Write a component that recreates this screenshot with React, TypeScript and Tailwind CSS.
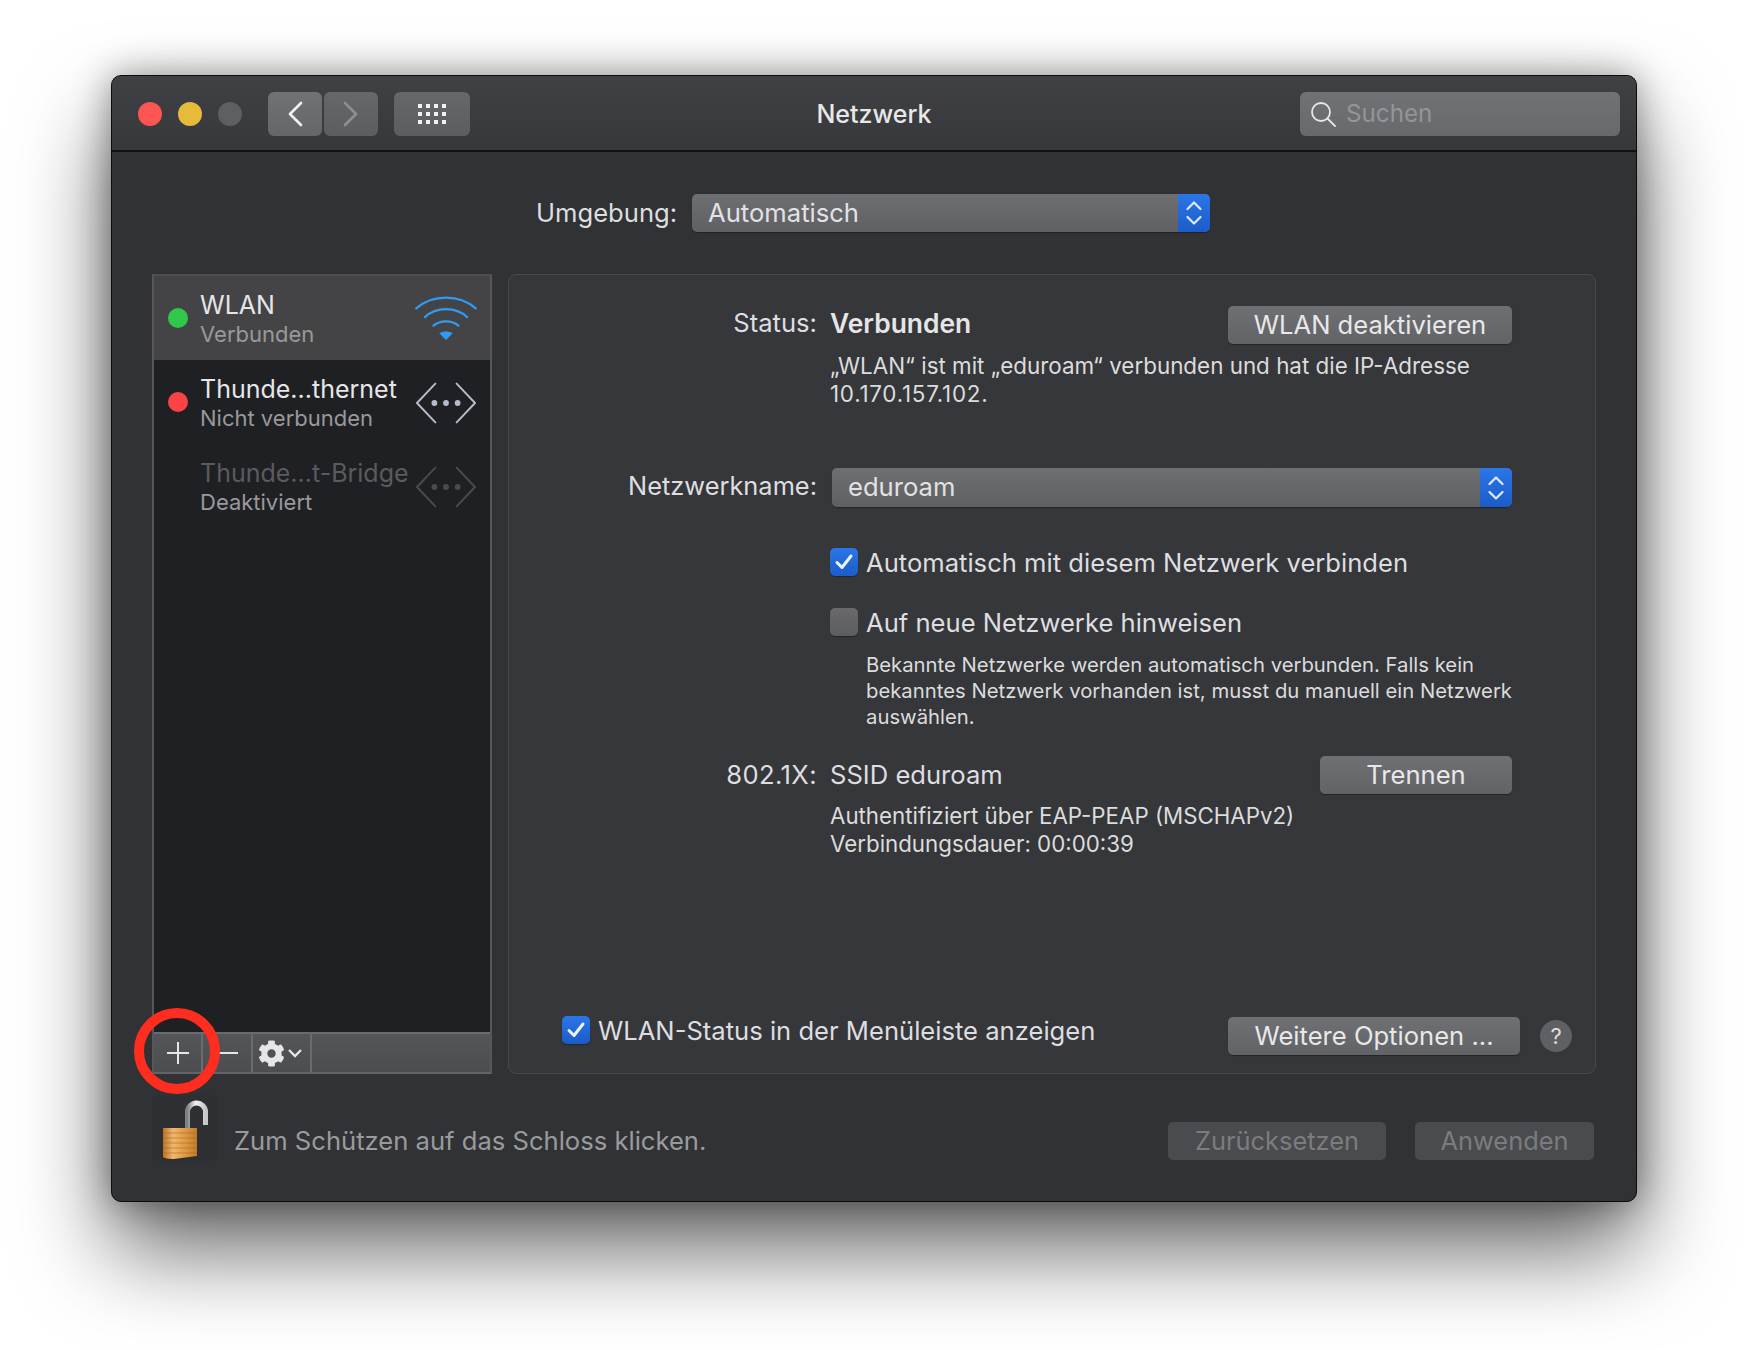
import { FaCog } from "react-icons/fa";

const FONT = "font-['Inter','Noto_Sans',sans-serif]";

function Stepper({ height }: { height: number }) {
  return (
    <div className="flex w-[32px] shrink-0 items-center justify-center rounded-r-[5px] bg-gradient-to-b from-[#2b76e8] to-[#1b5cc8]">
      <svg width="16" height={height} viewBox="0 0 16 28" fill="none" stroke="#dfe9fb" strokeWidth="2.2" strokeLinecap="round" strokeLinejoin="round">
        <path d="M1.5 10 L8 3.5 L14.5 10" />
        <path d="M1.5 18 L8 24.5 L14.5 18" />
      </svg>
    </div>
  );
}

function Select({ value, className }: { value: string; className: string }) {
  return (
    <div className={`flex overflow-hidden rounded-[5px] bg-gradient-to-b from-[#6e6f72] to-[#5f6063] shadow-[0_1px_1px_rgba(0,0,0,0.35)] ${className}`}>
      <span className="flex-1 pl-4 text-[25.6px] leading-[38px] text-[#e2e2e3]">{value}</span>
      <Stepper height={28} />
    </div>
  );
}

function Button({ label, className }: { label: string; className: string }) {
  return (
    <div className={`flex h-[38px] shrink-0 items-center justify-center rounded-[5px] bg-gradient-to-b from-[#6f7073] to-[#626366] text-[25.6px] leading-none text-[#e8e8e9] shadow-[0_1px_1px_rgba(0,0,0,0.35)] ${className}`}>
      {label}
    </div>
  );
}

function Checkbox({ checked }: { checked: boolean }) {
  if (!checked) {
    return <div className="h-[28px] w-[28px] shrink-0 rounded-[5px] bg-gradient-to-b from-[#69696c] to-[#5c5d60] shadow-[0_1px_1px_rgba(0,0,0,0.35)]" />;
  }
  return (
    <div className="flex h-[28px] w-[28px] shrink-0 items-center justify-center rounded-[5px] bg-gradient-to-b from-[#2b76e8] to-[#1b5cc8] shadow-[0_1px_1px_rgba(0,0,0,0.35)]">
      <svg width="20" height="18" viewBox="0 0 20 18" fill="none" stroke="#eef3fc" strokeWidth="3" strokeLinecap="round" strokeLinejoin="round">
        <path d="M3 9.5 L8 14.5 L17 3" />
      </svg>
    </div>
  );
}

function WifiIcon() {
  return (
    <svg width="62" height="46" viewBox="0 0 64 48" fill="none" stroke="#2f9bf2" strokeWidth="2.4" strokeLinecap="round">
      <path d="M1 14 C18 -1 46 -1 63 14" />
      <path d="M10 23 C22 12 42 12 54 23" />
      <path d="M19 32 C26 26 38 26 45 32" />
      <path d="M25 40 C29 37.5 35 37.5 39 40 L32 47 Z" fill="#2f9bf2" stroke="none" />
    </svg>
  );
}

function BridgeIcon({ color }: { color: string }) {
  return (
    <svg className="-ml-[1px] mr-[1px] translate-y-[1px]" width="60" height="42" viewBox="0 0 62 42" fill="none" stroke={color} strokeWidth="2" strokeLinecap="round" strokeLinejoin="round">
      <path d="M20 1 L1 21 L20 41" />
      <path d="M42 1 L61 21 L42 41" />
      <circle cx="19" cy="21" r="3" fill={color} stroke="none" />
      <circle cx="31" cy="21" r="3" fill={color} stroke="none" />
      <circle cx="43" cy="21" r="3" fill={color} stroke="none" />
    </svg>
  );
}

function LockIcon() {
  return (
    <svg width="66" height="67" viewBox="0 0 66 67" fill="none">
      <defs>
        <linearGradient id="brass" x1="0" y1="0" x2="1" y2="0">
          <stop offset="0" stopColor="#b9732a" />
          <stop offset="0.3" stopColor="#f2b76c" />
          <stop offset="0.7" stopColor="#dc963f" />
          <stop offset="1" stopColor="#c07a2c" />
        </linearGradient>
        <linearGradient id="shackle" x1="0" y1="0" x2="1" y2="0">
          <stop offset="0" stopColor="#7f8386" />
          <stop offset="0.45" stopColor="#f0f2f3" />
          <stop offset="1" stopColor="#c5c8cb" />
        </linearGradient>
      </defs>
      <rect width="66" height="66" rx="8" fill="#2e2f32" />
      <path d="M35.5 33 V17 A9 9 0 0 1 53.5 17 V30" stroke="url(#shackle)" strokeWidth="5" />
      <path d="M11 33 H45 V61 L22 64 C17 64 11 63 11 62 Z" fill="url(#brass)" />
      <g stroke="#a9651f" strokeWidth="1" opacity="0.55">
        <path d="M11 38 H45" />
        <path d="M11 43 H45" />
        <path d="M11 48 H45" />
        <path d="M11 53 H45" />
        <path d="M11 58 H45" />
      </g>
    </svg>
  );
}

type Service = {
  name: string;
  status: string;
  dot: string | null;
  selected?: boolean;
  disabled?: boolean;
};

const services: Service[] = [
  { name: "WLAN", status: "Verbunden", dot: "bg-[#2fc84b]", selected: true },
  { name: "Thunde...thernet", status: "Nicht verbunden", dot: "bg-[#fb4345]" },
  { name: "Thunde...t-Bridge", status: "Deaktiviert", dot: null, disabled: true },
];

function ServiceRow({ service }: { service: Service }) {
  return (
    <div className={`flex h-[84px] items-center pl-[14px] pr-[13px] ${service.selected ? "bg-[#444446]" : ""}`}>
      <div className={`h-[20px] w-[20px] shrink-0 rounded-full ${service.dot ?? ""}`} />
      <div className="ml-[12px] flex-1 whitespace-nowrap">
        <div className={`text-[25px] leading-[30px] ${service.disabled ? "text-[#5a5b5e]" : "text-[#e6e6e7]"}`}>{service.name}</div>
        <div className="translate-y-[1px] text-[22px] leading-[26px] text-[#98999b]">{service.status}</div>
      </div>
      {service.selected ? <WifiIcon /> : <BridgeIcon color={service.disabled ? "#4a4b4f" : "#b4bccb"} />}
    </div>
  );
}

function Sidebar() {
  return (
    <div className="flex w-[340px] shrink-0 flex-col border-2 border-t-2 border-[#4d4e50] border-b-[#636467] border-x-[#565759] bg-[#1f2024]">
      <div className="flex-1">
        {services.map((s) => (
          <ServiceRow key={s.name} service={s} />
        ))}
      </div>
      <div className="flex h-[40px] border-t-2 border-[#6a6b6d] bg-gradient-to-b from-[#545558] to-[#4c4d50] text-[#e3e3e4]">
        <div className="flex w-[49px] items-center justify-center border-r-2 border-[#6a6b6d]">
          <svg width="24" height="24" viewBox="0 0 24 24" stroke="#e6e6e7" strokeWidth="2"><path d="M12 1 V23 M1 12 H23" /></svg>
        </div>
        <div className="flex w-[50px] items-center justify-center border-r-2 border-[#6a6b6d]">
          <svg width="22" height="4" viewBox="0 0 22 4" stroke="#e6e6e7" strokeWidth="2"><path d="M0 2 H22" /></svg>
        </div>
        <div className="flex w-[59px] items-center justify-center gap-[3px] border-r-2 border-[#6a6b6d] pr-[4px]">
          <FaCog size={27} color="#e6e6e7" />
          <svg width="14" height="9" viewBox="0 0 14 9" fill="none" stroke="#e6e6e7" strokeWidth="2.4"><path d="M1 1 L7 7 L13 1" /></svg>
        </div>
      </div>
    </div>
  );
}

function DetailPanel() {
  return (
    <div className="flex flex-1 flex-col rounded-[8px] border border-[#47484b] bg-[#36373a] pr-[83px] pt-[31px]">
      <div className="flex h-[38px] items-center">
        <div className="w-[308px] -translate-y-[2px] text-right text-[25.6px] text-[#dedee0]">Status:</div>
        <div className="ml-[13px] flex-1 -translate-y-[1px] text-[26.4px] font-semibold text-[#e6e6e7]">Verbunden</div>
        <Button label="WLAN deaktivieren" className="w-[284px]" />
      </div>
      <div className="ml-[321px] mt-[8px] text-[22.4px] leading-[28px] text-[#dcdcdd]">
        <div>„WLAN“ ist mit „eduroam“ verbunden und hat die IP-Adresse</div>
        <div className="tracking-[0.75px]">10.170.157.102.</div>
      </div>
      <div className="mt-[60px] flex h-[39px] items-center">
        <div className="w-[308px] -translate-y-[1px] text-right text-[25.4px] text-[#dedee0]">Netzwerkname:</div>
        <Select value="eduroam" className="ml-[15px] h-[39px] flex-1" />
      </div>
      <div className="ml-[321px] mt-[41px] flex h-[28px] items-center gap-[8px] text-[25.6px] text-[#dedee0]">
        <Checkbox checked />
        <span className="translate-y-[1px]">Automatisch mit diesem Netzwerk verbinden</span>
      </div>
      <div className="ml-[321px] mt-[32px] flex h-[28px] items-center gap-[8px] text-[25.6px] text-[#dedee0]">
        <Checkbox checked={false} />
        <span className="translate-y-[1px]">Auf neue Netzwerke hinweisen</span>
      </div>
      <div className="ml-[357px] mt-[16px] text-[20.3px] leading-[26px] text-[#dcdcdd]">
        <div>Bekannte Netzwerke werden automatisch verbunden. Falls kein</div>
        <div>bekanntes Netzwerk vorhanden ist, musst du manuell ein Netzwerk</div>
        <div>auswählen.</div>
      </div>
      <div className="mt-[26px] flex h-[38px] items-center">
        <div className="w-[308px] text-right text-[25.6px] tracking-[0.4px] text-[#dedee0]">802.1X:</div>
        <div className="ml-[13px] flex-1 text-[25.6px] text-[#dedee0]">SSID eduroam</div>
        <Button label="Trennen" className="w-[192px]" />
      </div>
      <div className="ml-[321px] mt-[8px] text-[22.3px] leading-[28px] text-[#dcdcdd]">
        <div>Authentifiziert über EAP-PEAP (MSCHAPv2)</div>
        <div>Verbindungsdauer: 00:00:39</div>
      </div>
      <div className="-mr-[83px] mb-[18px] mt-auto flex items-start pl-[53px] pr-[23px]">
        <div className="flex flex-1 items-start gap-[8px] text-[25.6px] leading-[30px] text-[#dedee0]">
          <Checkbox checked />
          <span>WLAN-Status in der Menüleiste anzeigen</span>
        </div>
        <Button label="Weitere Optionen ..." className="mt-[1px] w-[292px]" />
        <div className="ml-[20px] mt-[4px] flex h-[32px] w-[32px] items-center justify-center rounded-full bg-[#5f6063] text-[22px] leading-none text-[#dedee0]">?</div>
      </div>
    </div>
  );
}

function TitleBar() {
  return (
    <div className="flex h-[76px] shrink-0 items-center border-b-2 border-[#111214] bg-gradient-to-b from-[#404144] to-[#37383b] pl-[26px] pr-[16px] pt-[2px]">
      <div className="flex items-center gap-[16px]">
        <div className="h-[24px] w-[24px] rounded-full bg-[#fd5552]" />
        <div className="h-[24px] w-[24px] rounded-full bg-[#e6bb39]" />
        <div className="h-[24px] w-[24px] rounded-full bg-[#5e5f62]" />
      </div>
      <div className="ml-[26px] flex gap-[2px]">
        <div className="flex h-[44px] w-[54px] items-center justify-center rounded-[6px] bg-gradient-to-b from-[#717275] to-[#656669]">
          <svg width="16" height="26" viewBox="0 0 16 26" fill="none" stroke="#f2f2f3" strokeWidth="2.6" strokeLinecap="round" strokeLinejoin="round"><path d="M14 2 L3 13 L14 24" /></svg>
        </div>
        <div className="flex h-[44px] w-[54px] items-center justify-center rounded-[6px] bg-gradient-to-b from-[#66676a] to-[#5c5d60]">
          <svg width="16" height="26" viewBox="0 0 16 26" fill="none" stroke="#8e8f92" strokeWidth="2.6" strokeLinecap="round" strokeLinejoin="round"><path d="M2 2 L13 13 L2 24" /></svg>
        </div>
      </div>
      <div className="ml-[16px] flex h-[44px] w-[76px] items-center justify-center rounded-[6px] bg-gradient-to-b from-[#66676a] to-[#5c5d60]">
        <svg width="28" height="20" viewBox="0 0 28 20" fill="#f2f2f3">
          {[0, 8, 16].map((y) =>
            [0, 8, 16, 24].map((x) => <rect key={`${x}-${y}`} x={x} y={y} width="4" height="4" />)
          )}
        </svg>
      </div>
      <div className="flex-1 pr-[22px] pt-[2px] text-center text-[25px] font-medium text-[#e8e8e9]">Netzwerk</div>
      <div className="flex h-[44px] w-[320px] items-center rounded-[6px] bg-gradient-to-b from-[#717275] to-[#68696c] pl-[10px]">
        <svg width="26" height="26" viewBox="0 0 26 26" fill="none" stroke="#e6e6e7" strokeWidth="1.8" strokeLinecap="round">
          <circle cx="11" cy="11" r="9" />
          <path d="M17.5 17.5 L25 25" />
        </svg>
        <span className="ml-[10px] text-[24.2px] leading-none text-[#949598]">Suchen</span>
      </div>
    </div>
  );
}

export default function App() {
  return (
    <div className={`relative h-[1350px] w-[1748px] overflow-hidden bg-white pl-[111px] pt-[75px] ${FONT}`}>
      <div className="flex h-[1127px] w-[1526px] flex-col overflow-hidden rounded-[10px] border border-[#0c0c0e] bg-[#313235] shadow-[0_0_36px_rgba(0,0,0,0.38),0_48px_90px_rgba(0,0,0,0.6)]">
        <TitleBar />
        <div className="flex flex-1 flex-col px-[40px]">
          <div className="mt-[42px] flex h-[38px] items-center">
            <div className="ml-[384px] text-[25.6px] text-[#dedee0]">Umgebung:</div>
            <Select value="Automatisch" className="ml-[15px] h-[38px] w-[518px]" />
          </div>
          <div className="mt-[42px] flex h-[800px] gap-[16px]">
            <Sidebar />
            <DetailPanel />
          </div>
          <div className="mt-[21px] flex items-start">
            <LockIcon />
            <div className="ml-[16px] mt-[31px] flex-1 text-[25.6px] leading-[30px] text-[#9a9b9d]">Zum Schützen auf das Schloss klicken.</div>
            <div className="mt-[27px] flex gap-[29px] pr-[2px]">
              <div className="flex h-[38px] w-[218px] items-center justify-center rounded-[5px] bg-[#4a4b4e] text-[25.4px] text-[#7b7c7f]">Zurücksetzen</div>
              <div className="flex h-[38px] w-[179px] items-center justify-center rounded-[5px] bg-[#4a4b4e] text-[25.4px] text-[#7b7c7f]">Anwenden</div>
            </div>
          </div>
        </div>
      </div>
      {/* red annotation ring over the + button */}
      <div className="absolute left-[134px] top-[1008px] h-[86px] w-[86px] rounded-full border-[10px] border-[#ff2d1f]" />
    </div>
  );
}
